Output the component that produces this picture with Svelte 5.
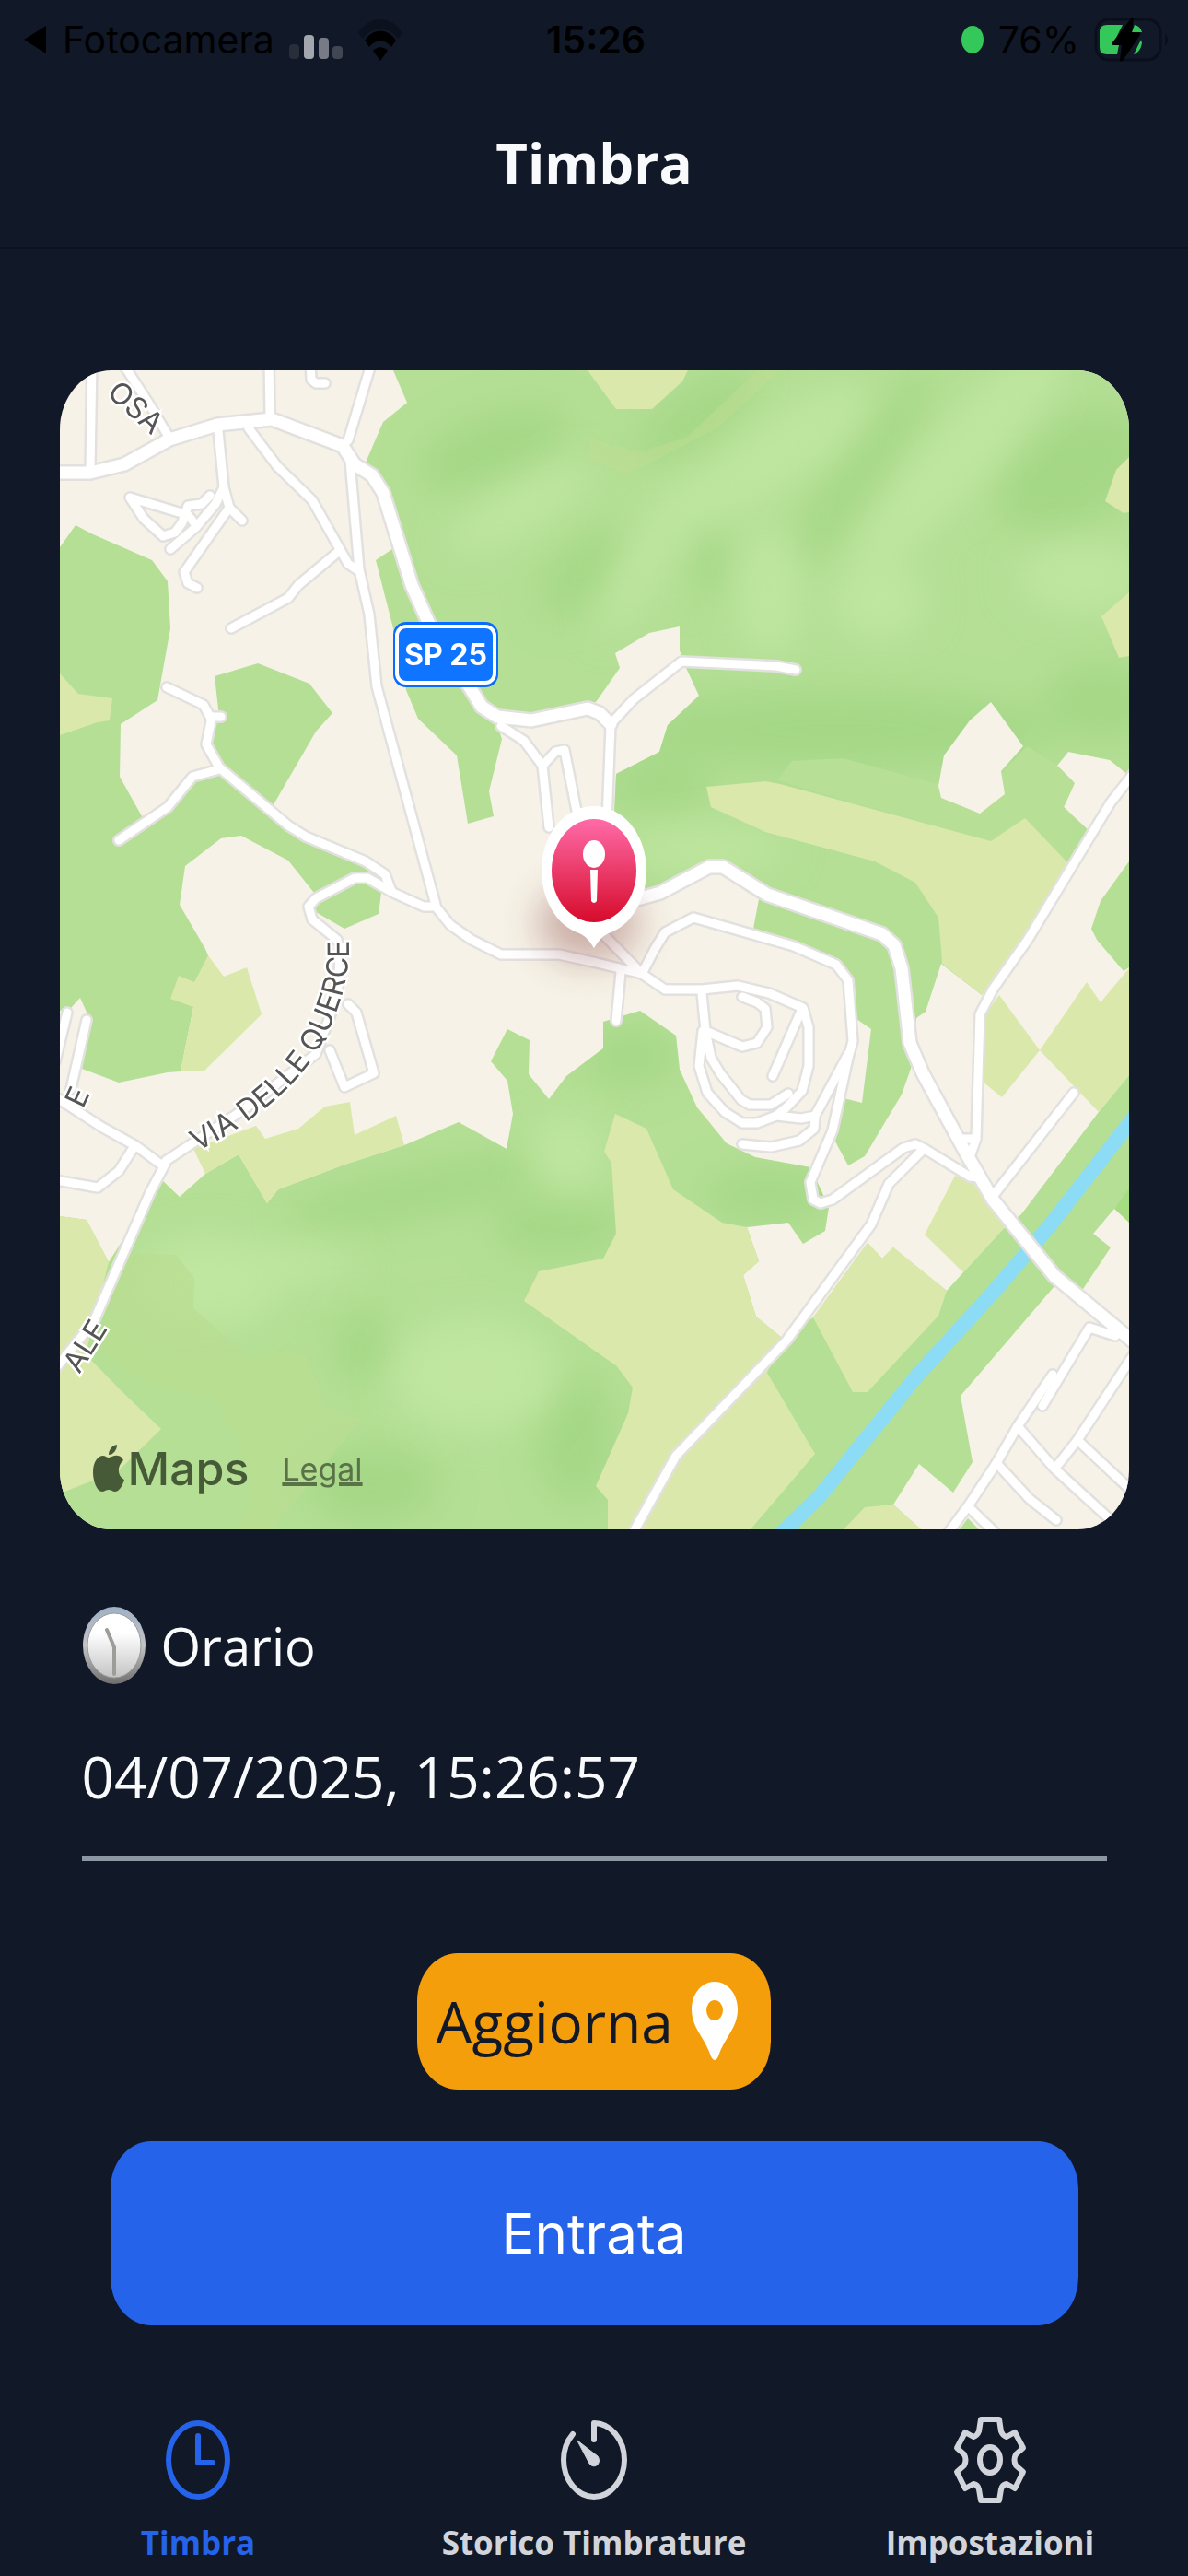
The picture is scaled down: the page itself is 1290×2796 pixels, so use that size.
<script lang="ts">
    type Tab = { id: string; label: string };

    const tabs: Tab[] = [
        { id: 'timbra', label: 'Timbra' },
        { id: 'storico', label: 'Storico Timbrature' },
        { id: 'impostazioni', label: 'Impostazioni' },
    ];

    let activeTab = 'timbra';
    let orario = '04/07/2025, 15:26:57';

    // woodland
    const northWood =
        'M362 0 377 35 351 56 332 100 355 131 364 192 343 206 362 280 376 347 389 378 431 418 443 492 471 484 466 457 480 400 473 380 582 360 608 323 603 307 640 285 673 278 673 304 680 323 694 353 660 385 651 414 604 438 602 478 632 575 705 539 759 574 753 606 843 647 858 664 865 704 881 715 871 795 851 790 842 837 856 863 874 853 914 786 925 755 930 703 940 696 957 644 1001 678 1042 628 1097 537 1118 500 1090 474 1102 448 1083 429 1095 414 1140 423 1161 440V0Z';
    const southWood =
        'M110 878 130 897 158 872 194 851 225 904 237 889 309 862 374 841 433 816 485 845 492 807 486 771 468 750 486 715 510 727 509 764 531 791 550 766 590 736V707L630 695 669 722 673 759 692 800 724 839 755 854 815 865 835 908 831 934 807 948 791 925 746 930 759 967 742 982 756 1027 784 1050 818 1028 877 947 893 964 905 952 963 999 981 979 1027 929 1044 916 1128 805 1161 765V890L1145 910 1122 937 1141 952 1111 997 1080 994 978 1113 991 1185 970 1218 933 1187 905 1231 935 1258H0V918L29 922 53 968Z';
    const woods = [
        northWood,
        southWood,
        'M0 192 17 168 36 178 100 206 117 229 120 280 106 358 66 384 65 441 89 484 117 474 144 441 173 433 259 502 332 535 353 547 349 567 346 590 309 606 278 588 276 567 248 532 197 505 175 508 136 538 130 580 158 628 161 635 145 691 131 761 117 762 64 773 24 758 32 703 22 681 12 692 0 695Z',
        'M168 332 215 318 271 340 296 372 278 392 231 473 173 433 160 406 173 376Z',
        'M1161 533 1130 576 1120 606 1126 618 1155 652 1161 648Z',
        'M986 1246 998 1258H977Z',
    ];

    const fields = [
        'M702 452 766 446 782 449 1011 511 1048 486 1097 537 1042 628 1001 678 958 644 957 628 954 594 929 556 885 533 766 501 707 474Z',
        'M573 0 604 42H643L676 12 682 0Z',
        'M1161 94 1147 108 1135 142 1155 155 1161 154Z',
        'M1161 241 1131 267 1150 312 1161 310Z',
        'M161 635 178 658 203 648 219 699 156 761H131L145 691 120 682 129 657 146 664Z',
        'M0 329 20 351 57 356 54 380 41 382 0 396Z',
        'M0 918 29 922 53 968 37 1032 28 1068 68 1109 110 1149 64 1194 0 1219Z',
        'M145 845 213 820 223 834 259 823 288 799 315 794 320 830 365 809 374 841 309 862 237 889 225 904 194 851 158 872Z',
        'M603 807 637 823 666 889 719 925 746 930 759 967 742 982 756 1027 784 1050 768 1088 820 1176 750 1258H595V1226L582 1211 617 1132 622 1104 604 1080 595 1074 504 1010 520 978 590 964 604 937 599 860 591 848Z',
        'M818 1028 877 947 893 964 905 952 963 999 954 1026 877 1109H861Z',
        'M972 874 939 938 981 979 1027 929 990 879Z',
        'M1020 678 1064 738 1023 789 1003 773V701Z',
        'M1064 738 1115 664 1130 686 1161 649V765L1128 805Z',
        'M851 1258 874 1234 905 1231 935 1258Z',
    ];

    const clearing = 'M1011 360 1046 408 1022 435 1026 460 999 481 957 464 954 451 960 418 988 380Z';

    const streets = [
        'M35 -10 33 106',
        'M70 -5 96 35 117 70',
        'M227 -10 228 49',
        'M339 -10 313 76',
        'M272 -10 273 10 278 14 288 14',
        'M172 66 178 127 184 149 198 163',
        'M184 149 135 219 139 231 149 236',
        'M178 127 169 145 148 170 120 194',
        'M148 168 139 157 76 138 91 161 112 180 125 176 133 165 139 147 154 145 163 136',
        'M205 63 236 104 274 141 313 210 322 216',
        'M301 198 259 233 248 247 186 280',
        'M315 98 325 216 336 265 344 343 408 580',
        'M116 344 156 363 163 376 175 376',
        'M165 376 159 406 173 431 248 494 267 506 332 533 353 547 360 565',
        'M64 510 117 474 144 441 173 433',
        'M301 618 274 596 270 582 278 573 320 551 334 551 362 567 395 582 408 582 424 602 447 618 479 634 542 634 583 643 632 655 657 672 697 672 736 668 770 676 807 692 813 713 813 755 806 782 789 800 778 809',
        'M697 676 701 717 741 734 757 730 768 713 766 693 757 686 741 680',
        'M701 717 707 746 717 763 740 792 749 797 772 797 791 785',
        'M698 717 694 755 703 784 722 805 741 817 757 817 778 809 805 812 820 809 856 742',
        'M805 695 774 766',
        'M820 811 819 823 803 836 772 843 741 840',
        'M632 655 646 628 657 610 688 594 797 625 843 645 856 662 861 728 856 746 839 825 815 881 818 900 826 904 839 900 916 844 929 840 939 845 988 875 998 876',
        'M937 846 900 883 881 927 789 1053 669 1178 620 1266',
        'M1170 432 1141 469 1051 618 1013 672 999 699 995 834 988 854',
        'M981 834 994 834',
        'M1015 894 1101 784',
        'M588 610 632 655',
        'M609 653 604 706',
        'M479 386 504 402 524 429 531 496',
        'M524 429 538 414 548 412 561 478',
        'M598 384 594 490',
        'M598 384 623 357 675 316 778 321 799 325',
        'M313 688 322 697 341 763 309 778 293 738',
        'M115 858 200 802 278 742 301 680 305 625',
        'M110 862 83 842 45 821 -10 785',
        'M81 842 64 869 41 887 -10 878',
        'M114 862 98 892 64 970 37 1032 -10 1090',
        'M8 697 -5 750',
        'M29 705 12 780',
        'M1146 1048 1118 1039 1067 1124',
        'M1078 1090 1040 1146 1017 1186 986 1233 960 1268',
        'M1040 1146 1080 1192 1150 1256',
        'M1170 1062 1105 1161 1082 1190',
        'M1105 1161 1170 1222',
        'M1017 1186 1053 1225 1082 1248',
        'M986 1233 1020 1266',
    ];

    const mainRoads = [
        'M-10 111 33 111 70 102 119 75 171 59 230 53 307 82 320 102 339 114 351 133 382 233 404 282 447 347 458 365 475 376 512 380 573 367 586 372 598 384',
        'M620 576 652 567 705 539 720 539 768 569 893 612 906 624 914 649 923 730 937 763 983 848 1013 900 1080 983 1170 1058',
    ];
</script>

<svelte:head>
    <title>Timbra</title>
</svelte:head>

<div class="app">
    <div class="status-bar">
        <div class="status-left">
            <svg class="back-arrow" viewBox="0 0 26 32"><path d="M25 1v30L1 16Z" /></svg>
            <span>Fotocamera</span>
            <svg class="signal" viewBox="0 0 58 28">
                <rect x="0" y="11" width="11" height="16" rx="4" fill="#292e3b" />
                <rect x="16" y="1" width="11" height="26" rx="4" fill="#a3a6ae" />
                <rect x="32" y="4" width="11" height="23" rx="4" fill="#777b86" />
                <rect x="47" y="13" width="11" height="14" rx="4" fill="#414653" />
            </svg>
            <svg class="wifi" viewBox="0 0 50 46">
                <path d="M1 16C13-4 37-4 49 16l-5 6C34 8 16 8 6 22Z" fill="#0b111d" />
                <path d="M8 24c9-14 25-14 34 0l-5 7c-7-9-17-9-24 0Z" />
                <path d="M17 35c5-5 11-5 16 0l-8 11Z" />
            </svg>
        </div>
        <span class="clock">15:26</span>
        <div class="status-right">
            <span class="dot"></span>
            <span>76%</span>
            <svg class="battery" viewBox="0 0 82 48">
                <rect x="2" y="2" width="70" height="44" rx="14" fill="none" stroke="#0a0f1a" stroke-width="3" />
                <path d="M77 17q6 7 0 14Z" fill="#0a0f1a" />
                <path d="M14 8H31L20 30h7l-2 10H14q-8 0-8-8V16q0-8 8-8Z" fill="#34c759" />
                <path d="M44 8q6 1 8 8H41Z M51 24 52 28Q50 38 43 40Z" fill="#34c759" />
                <path d="M41 0 20 27q-1 3 2 3h8l-2 16q1 3 3 1L50 19q1-3-2-3h-7l2-15Z" fill="#000" />
            </svg>
        </div>
    </div>

    <header>
        <h1>Timbra</h1>
    </header>

    <main>
        <div class="map">
            <svg class="map-canvas" viewBox="0 0 1161 1258" role="img" aria-label="Mappa della posizione">
                <defs>
                    <clipPath id="wood-clip">
                        <path d={northWood} />
                        <path d={southWood} />
                    </clipPath>
                    <filter id="soft" x="-50%" y="-50%" width="200%" height="200%">
                        <feGaussianBlur stdDeviation="20" />
                    </filter>
                    <linearGradient id="pin-fill" x1="0" y1="0" x2="0" y2="1">
                        <stop offset="0" stop-color="#ff6ba8" />
                        <stop offset="1" stop-color="#d60b2b" />
                    </linearGradient>
                    <path id="querce" d="M149 848Q246 798 284 732Q312 680 314 630Q314 600 308 560" />
                </defs>

                <rect width="1161" height="1258" fill="#f6f2e7" />

                {#each woods as d}
                    <path {d} fill="#b4df95" />
                {/each}

                <!-- hill shading -->
                <g clip-path="url(#wood-clip)">
                    <g filter="url(#soft)" fill="#a4d786">
                        <ellipse cx="470" cy="85" rx="85" ry="35" transform="rotate(-20 470 85)" />
                        <ellipse cx="690" cy="50" rx="75" ry="28" transform="rotate(-35 690 50)" />
                        <ellipse cx="870" cy="110" rx="130" ry="24" transform="rotate(-55 870 110)" />
                        <ellipse cx="1100" cy="110" rx="90" ry="55" transform="rotate(-30 1100 110)" />
                        <ellipse cx="570" cy="220" rx="60" ry="30" transform="rotate(-45 570 220)" />
                        <ellipse cx="710" cy="210" rx="20" ry="40" />
                        <ellipse cx="850" cy="390" rx="230" ry="40" />
                        <ellipse cx="1130" cy="360" rx="60" ry="40" />
                        <ellipse cx="650" cy="450" rx="60" ry="28" />
                        <ellipse cx="620" cy="745" rx="50" ry="30" />
                        <ellipse cx="400" cy="890" rx="160" ry="24" transform="rotate(-12 400 890)" />
                        <ellipse cx="540" cy="930" rx="70" ry="30" />
                        <ellipse cx="770" cy="895" rx="70" ry="26" />
                        <ellipse cx="330" cy="1060" rx="30" ry="40" />
                        <ellipse cx="340" cy="1210" rx="70" ry="40" />
                        <ellipse cx="560" cy="1160" rx="40" ry="70" />
                    </g>
                    <g filter="url(#soft)" fill="#c0e6a0">
                        <ellipse cx="780" cy="90" rx="120" ry="34" transform="rotate(-35 780 90)" />
                        <ellipse cx="980" cy="90" rx="170" ry="34" transform="rotate(-48 980 90)" />
                        <ellipse cx="500" cy="150" rx="90" ry="24" transform="rotate(-30 500 150)" />
                        <ellipse cx="640" cy="200" rx="100" ry="22" transform="rotate(-60 640 200)" />
                        <ellipse cx="770" cy="240" rx="34" ry="70" />
                        <ellipse cx="890" cy="250" rx="50" ry="40" />
                        <ellipse cx="1110" cy="225" rx="70" ry="36" />
                        <ellipse cx="700" cy="520" rx="90" ry="20" />
                        <ellipse cx="550" cy="850" rx="40" ry="40" />
                        <ellipse cx="160" cy="990" rx="80" ry="50" />
                        <ellipse cx="450" cy="1090" rx="90" ry="60" />
                        <ellipse cx="240" cy="970" rx="80" ry="20" />
                    </g>
                    <path d="M575 72 600 82 632 88 682 72 710 45 757 0H782L715 62 640 101 615 112 575 96Z" fill="#c2dc93" opacity="0.4" />
                    <path d="M779 445 795 424 850 421 1000 462 1050 408 1100 440 1097 537 1048 486 1011 511Z" fill="#b8df96" />
                    <path d="M70 958 126 960 146 985 145 1018 208 1075 245 1062 270 1070 288 1124 328 1138 230 1258H190L210 1225 195 1160 170 1120 90 1098 40 1060Z" fill="#b9dd91" opacity="0.7" />
                </g>

                <path d={clearing} fill="#f6f2e7" />
                {#each fields as d}
                    <path {d} fill="#dae8ab" />
                {/each}
                <path d="M1161 888 1145 910 1161 925Z" fill="#a6dd82" />
                <path d="M1170 806 1076 927 1015 999 931 1091 824 1223 780 1266" fill="none" stroke="#8cdcf6" stroke-width="16" />

                <g fill="none" stroke-linejoin="round" stroke-linecap="round">
                    {#each streets as d}
                        <path {d} stroke="#e2e1df" stroke-width="14" />
                    {/each}
                    {#each mainRoads as d}
                        <path {d} stroke="#e2e1df" stroke-width="18" />
                    {/each}
                    {#each streets as d}
                        <path {d} stroke="#fff" stroke-width="9" />
                    {/each}
                    {#each mainRoads as d}
                        <path {d} stroke="#fff" stroke-width="13" />
                    {/each}
                </g>

                <g class="street-name">
                    <text><textPath href="#querce">VIA DELLE QUERCE</textPath></text>
                    <text x="50" y="26" transform="rotate(42 50 26)">OSA</text>
                    <text x="21" y="1090" transform="rotate(-58 21 1090)">ALE</text>
                    <text x="25" y="802" transform="rotate(-65 25 802)">E</text>
                </g>

                <rect x="362" y="273" width="114" height="71" rx="14" fill="#0a6cff" />
                <rect x="366" y="278" width="106" height="61" rx="10" fill="#0f74ff" stroke="#fff" stroke-width="4" />
                <text class="shield" x="419" y="320" text-anchor="middle">SP 25</text>

                <ellipse cx="574" cy="600" rx="54" ry="42" fill="#7a2f2f" opacity="0.35" filter="url(#soft)" />
                <path d="M580 473c32 0 57 31 57 70 0 32-17 60-41 68-7 3-11 8-16 16-5-8-9-13-16-16-24-8-41-36-41-68 0-39 25-70 57-70Z" fill="#fff" />
                <ellipse cx="580" cy="543" rx="46" ry="56" fill="url(#pin-fill)" />
                <ellipse cx="580" cy="525" rx="12" ry="15" fill="#fff" />
                <path d="M576 542h8l-1 34q-3 4-6 0Z" fill="#fff" />
            </svg>

            <div class="attribution">
                <svg class="apple" viewBox="0 0 34 52">
                    <path d="M17 14c3 0 6-3 10-2 3 0 5 3 6 5-7 6-7 17 1 21-2 7-6 13-10 13-3 0-4-2-7-2s-5 2-7 2C4 51 0 39 0 30c0-11 5-18 11-18 2 0 4 2 6 2Z" />
                    <path d="M17 11C17 5 21 1 26 0c0 6-4 11-9 11Z" />
                </svg>
                <span class="maps">Maps</span>
                <a href="#legal">Legal</a>
            </div>
        </div>

        <div class="time-field">
            <label for="orario">
                <svg class="emoji" viewBox="0 0 70 86">
                    <defs>
                        <linearGradient id="rim" x1="0" y1="0" x2="0" y2="1">
                            <stop offset="0" stop-color="#9fb0c6" />
                            <stop offset="0.5" stop-color="#c4c4c4" />
                            <stop offset="1" stop-color="#6f6f6f" />
                        </linearGradient>
                        <linearGradient id="face" x1="0" y1="0" x2="0" y2="1">
                            <stop offset="0.3" stop-color="#fff" />
                            <stop offset="1" stop-color="#c4c4c4" />
                        </linearGradient>
                    </defs>
                    <ellipse cx="35" cy="43" rx="34" ry="42" fill="url(#rim)" />
                    <ellipse cx="35" cy="43" rx="29" ry="35" fill="url(#face)" stroke="#9b9b9b" stroke-width="1" />
                    <path d="M27 26 35 45V74" fill="none" stroke="#9c9c98" stroke-width="4" stroke-linecap="round" />
                </svg>
                Orario
            </label>
            <input id="orario" type="text" readonly value={orario} />
        </div>

        <button class="refresh" type="button">
            Aggiorna
            <svg viewBox="0 0 50 86">
                <path d="M25 0C11 0 0 13 0 30c0 20 14 30 21 51q4 8 8 0C36 60 50 50 50 30 50 13 39 0 25 0Zm0 20a9 11 0 1 1 0 22a9 11 0 1 1 0-22Z" fill-rule="evenodd" />
            </svg>
        </button>
        <button class="entrata" type="button">Entrata</button>
    </main>

    <nav>
        {#each tabs as tab}
            <a href="#{tab.id}" class:active={tab.id === activeTab}>
                <svg viewBox="0 0 80 96" fill="none" stroke="currentColor" stroke-linecap="round" stroke-linejoin="round">
                    {#if tab.id === 'timbra'}
                        <ellipse cx="40" cy="48" rx="32" ry="40" stroke-width="6" />
                        <path d="M40 22V51H56" stroke-width="6" />
                    {:else if tab.id === 'storico'}
                        <path d="M40 26V8C58 8 73 26 73 48S58 88 40 88 7 70 7 48C7 37 11 27 17 20" stroke-width="6" />
                        <path d="M22 27 44 44c5 8-4 15-9 8Z" fill="currentColor" stroke-width="1" />
                    {:else}
                        <path d="M30 4H50L52 17Q54 22 58 23L67 18 76 35 68 42Q65 48 68 54L76 61 67 79 58 74Q53 75 52 80L50 92H30L28 80Q27 75 22 74L13 79 4 61 12 54Q15 48 12 42L4 35 13 18 22 23Q26 22 28 17Z" stroke-width="6" />
                        <ellipse cx="40" cy="48" rx="11" ry="14" stroke-width="6" />
                    {/if}
                </svg>
                <span>{tab.label}</span>
            </a>
        {/each}
    </nav>
</div>

<style>
    :global(body) {
        background-color: #111827;
    }

    .app {
        display: flex;
        flex-direction: column;
        min-height: 100vh;
        background-color: #111827;
        color: #f9fafb;
        font-family: "Open Sans", "Noto Sans", sans-serif;
    }

    .status-bar {
        display: grid;
        grid-template-columns: 1fr auto 1fr;
        align-items: center;
        height: 86px;
        padding: 0 20px 0 24px;
        color: #000;
        font-family: Inter, "Liberation Sans", sans-serif;
        font-size: 41px;
    }

    .status-left,
    .status-right {
        display: flex;
        align-items: center;
        gap: 16px;
    }

    .status-right {
        justify-content: flex-end;
    }

    .back-arrow {
        width: 28px;
        height: 32px;
    }

    .signal {
        width: 58px;
        height: 28px;
        margin-top: 16px;
    }

    .wifi {
        width: 50px;
        height: 46px;
    }

    .clock {
        font-weight: 600;
    }

    .dot {
        width: 24px;
        height: 30px;
        border-radius: 50%;
        background-color: #34c759;
    }

    .battery {
        width: 82px;
        height: 48px;
    }

    header {
        display: flex;
        align-items: center;
        justify-content: center;
        height: 182px;
        border-bottom: 2px solid #0c121e;
    }

    h1 {
        margin: 0;
        font-size: 60px;
        font-weight: 700;
        line-height: 80px;
    }

    main {
        display: flex;
        flex-direction: column;
        align-items: center;
        padding: 132px 5% 0;
    }

    .map {
        position: relative;
        width: 100%;
        overflow: hidden;
        border-radius: 56px / 64px;
    }

    .map-canvas {
        display: block;
        width: 100%;
    }

    .street-name {
        fill: #555;
        stroke: #fff;
        stroke-width: 5px;
        paint-order: stroke;
        font-family: Inter, "Liberation Sans", sans-serif;
        font-size: 32px;
    }

    .shield {
        fill: #fff;
        font-family: Inter, "Liberation Sans", sans-serif;
        font-size: 32px;
        font-weight: 700;
    }

    .attribution {
        position: absolute;
        bottom: 36px;
        left: 36px;
        display: flex;
        align-items: center;
        color: #475a38;
        font-family: Inter, "Liberation Sans", sans-serif;
    }

    .apple {
        width: 34px;
        height: 52px;
        fill: #475a38;
    }

    .maps {
        margin-left: 4px;
        font-size: 50px;
        font-weight: 500;
    }

    .attribution a {
        margin-left: 36px;
        color: #5a7248;
        font-size: 34px;
        text-decoration-thickness: 4px;
    }

    .time-field {
        width: 100%;
        box-sizing: border-box;
        padding: 80px 24px 0;
    }

    label {
        display: flex;
        align-items: center;
        gap: 16px;
        font-size: 56px;
        line-height: 92px;
    }

    .emoji {
        width: 70px;
        height: 86px;
    }

    input {
        width: 100%;
        box-sizing: border-box;
        height: 188px;
        padding: 20px 0 12px;
        border: 0;
        border-bottom: 5px solid #8a97a3;
        border-radius: 0;
        outline: 0;
        background: none;
        color: inherit;
        font-family: inherit;
        font-size: 62px;
    }

    button {
        border: 0;
        font-family: inherit;
        cursor: pointer;
    }

    .refresh {
        display: flex;
        align-items: center;
        gap: 20px;
        height: 148px;
        margin-top: 100px;
        padding: 0 36px 0 20px;
        border-radius: 44px / 52px;
        background-color: #f59e0b;
        color: #111827;
        font-size: 62px;
    }

    .refresh svg {
        width: 50px;
        height: 86px;
        fill: #fff;
    }

    .entrata {
        align-self: stretch;
        height: 200px;
        margin: 56px 55px 0;
        border-radius: 44px / 52px;
        background-color: #2563eb;
        color: #fff;
        font-family: Inter, "Liberation Sans", sans-serif;
        font-size: 60px;
    }

    nav {
        display: grid;
        grid-template-columns: repeat(3, 1fr);
        margin-top: auto;
        padding: 96px 0 8px;
    }

    nav a {
        display: flex;
        flex-direction: column;
        align-items: center;
        gap: 14px;
        color: #d1d5db;
        font-size: 35px;
        font-weight: 700;
        line-height: 56px;
        text-decoration: none;
    }

    nav a.active {
        color: #2563eb;
    }

    nav svg {
        width: 80px;
        height: 96px;
    }
</style>
